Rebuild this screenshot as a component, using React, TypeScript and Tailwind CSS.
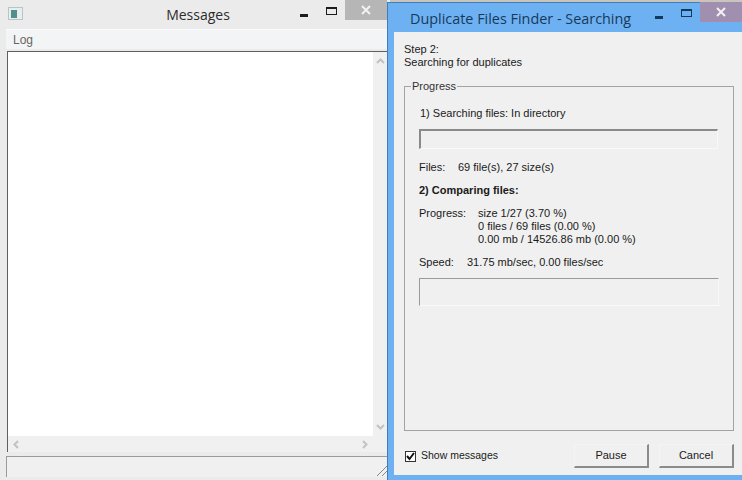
import React from 'react';

const uiFont = "font-['Liberation_Sans','Noto_Sans',sans-serif]";

const WindowControls = ({ dark, closeClass, gap }: { dark: string; closeClass: string; gap: string }) => (
  <div className="flex items-start">
    <div className={`mt-[14px] h-[3px] w-[8px] ${dark}`} />
    <div className={`${gap} mt-[7px] h-[8px] w-[11px] border border-t-2 ${dark === 'bg-[#1c1c1c]' ? 'border-[#1c1c1c]' : 'border-[#123a5c]'}`} />
    <div className={`ml-[8px] flex h-[20px] w-[42px] items-center justify-center ${closeClass}`}>
      <svg width="10" height="10" viewBox="0 0 10 10">
        <path d="M1 1 L9 9 M9 1 L1 9" stroke="#f4f0f4" strokeWidth="2" fill="none" />
      </svg>
    </div>
  </div>
);

const Chevron = ({ d }: { d: string }) => (
  <svg width="9" height="9" viewBox="0 0 9 9">
    <path d={d} stroke="#c2c2c2" strokeWidth="2" fill="none" />
  </svg>
);

const SunkenBar = ({ className }: { className: string }) => (
  <div className={`border-r border-b border-r-[#f8f8f8] border-b-[#fafafa] ${className}`} />
);

const Button = ({ label }: { label: string }) => (
  <div className="flex h-[24px] w-[75px] items-center justify-center border border-t-[#f4f4f4] border-l-[#f4f4f4] border-r-2 border-b-2 border-r-[#8b8b8b] border-b-[#8b8b8b] bg-[#f0f0f0] text-[11px] text-[#1a1a1a]">
    {label}
  </div>
);

export default function App() {
  return (
    <div className={`relative h-[480px] w-[742px] overflow-hidden bg-[#c9c4bd] ${uiFont}`}>
      {/* Messages window */}
      <div className="absolute left-0 top-0 flex h-[480px] w-[390px] flex-col bg-[#ebebeb]">
        <div className="flex h-[29px] shrink-0 items-start">
          <div className="ml-[8px] mt-[7px] flex h-[13px] w-[15px] items-center border border-[#b9c4c4] bg-[#e6eeee] pl-[2px]">
            <div className="h-[8px] w-[6px] bg-[#4f8f8c]" />
          </div>
          <div className="ml-[143px] mt-[4px] w-[64px] whitespace-nowrap text-center font-['Open_Sans',sans-serif] text-[14px] leading-[21px] text-[#2b2b2b]">Messages</div>
          <div className="ml-[70px]">
            <WindowControls dark="bg-[#1c1c1c]" closeClass="bg-[#b6b6b6]" gap="ml-[18px]" />
          </div>
        </div>
        <div className="ml-[6px] flex h-[20px] shrink-0 items-center border-t border-[#fafafa] bg-[#f3f4f5] pl-[7px] text-[12px] text-[#666666]">Log</div>
        <div className="ml-[7px] mt-[2px] flex h-[401px] shrink-0 flex-col border-l border-t border-[#5f5f5f] bg-[#f0f0f0]">
          <div className="flex h-[384px]">
            <div className="w-[365px] bg-white" />
            <div className="flex w-[14px] flex-col items-center justify-between pb-[5px] pt-[5px]">
              <Chevron d="M1 6 L4.5 2.5 L8 6" />
              <Chevron d="M1 3 L4.5 6.5 L8 3" />
            </div>
          </div>
          <div className="flex h-[16px] w-[365px] items-center justify-between px-[4px]">
            <Chevron d="M6 1 L2.5 4.5 L6 8" />
            <Chevron d="M3 1 L6.5 4.5 L3 8" />
          </div>
        </div>
        <div className="ml-[6px] mt-[4px] h-[21px] w-[381px] border-l border-t border-[#9a9a9a] bg-[#f0f0f0]" />
      </div>

      {/* resize grip */}
      <svg width="12" height="12" viewBox="0 0 12 12" className="absolute left-[376px] top-[465px]">
        <path d="M1 11 L11 1 M6 11 L11 6" stroke="#8a8a8a" strokeWidth="1" fill="none" />
      </svg>

      {/* Duplicate Files Finder window */}
      <div className="absolute left-[387px] top-[2px] flex h-[478px] w-[355px] flex-col border-l border-t border-[#3f7fb8] bg-[#6db1f3]">
        <div className="flex h-[29px] shrink-0 items-start">
          <div className="ml-[22px] mt-[5px] w-[235px] whitespace-nowrap font-['Open_Sans',sans-serif] text-[14.4px] leading-[21px] text-[#17395a]">Duplicate Files Finder - Searching</div>
          <div className="ml-[12px] -mt-[1px]">
            <WindowControls dark="bg-[#123a5c]" closeClass="bg-[#a08fae]" gap="ml-[18px]" />
          </div>
        </div>
        <div className="ml-[6px] flex h-[443px] w-[348px] shrink-0 flex-col bg-[#f0f0f0] pl-[10px] text-[11px] text-[#1a1a1a]">
          <div className="mt-[11px] leading-[13px]">Step 2:</div>
          <div className="leading-[13px]">Searching for duplicates</div>

          <div className="relative mt-[17px] h-[345px] w-[330px] border border-[#a3a3a3] pl-[14px]">
            <div className="absolute -top-[7px] left-[6px] bg-[#f0f0f0] px-[1px] leading-[13px] text-[#333333]">Progress</div>
            <div className="ml-[1px] mt-[20px] leading-[13px]">1) Searching files: In directory</div>
            <SunkenBar className="mt-[9px] h-[20px] w-[299px] border-t-2 border-l-2 border-t-[#8a8a8a] border-l-[#8a8a8a]" />
            <div className="mt-[12px] flex leading-[13px]">
              <span className="w-[39px]">Files:</span>
              <span>69 file(s), 27 size(s)</span>
            </div>
            <div className="mt-[10px] font-bold leading-[13px]">2) Comparing files:</div>
            <div className="mt-[10px] flex leading-[13px]">
              <span className="w-[59px]">Progress:</span>
              <div>
                <div>size 1/27 (3.70 %)</div>
                <div>0 files / 69 files (0.00 %)</div>
                <div>0.00 mb / 14526.86 mb (0.00 %)</div>
              </div>
            </div>
            <div className="mt-[10px] flex leading-[13px]">
              <span className="w-[48px]">Speed:</span>
              <span>31.75 mb/sec, 0.00 files/sec</span>
            </div>
            <SunkenBar className="mt-[9px] h-[28px] w-[300px] border-t border-l border-t-[#9a9a9a] border-l-[#9a9a9a]" />
          </div>

          <div className="mt-[13px] flex items-center">
            <div className="ml-[1px] flex h-[11px] w-[11px] items-center justify-center border border-[#333333] bg-white">
              <svg width="9" height="9" viewBox="0 0 9 9">
                <path d="M1 4 L3.5 7 L8 1" stroke="#111111" strokeWidth="2" fill="none" />
              </svg>
            </div>
            <span className="ml-[5px] mr-[77px] w-[76px] whitespace-nowrap text-[10.5px]">Show messages</span>
            <Button label="Pause" />
            <div className="ml-[10px]">
              <Button label="Cancel" />
            </div>
          </div>
        </div>
      </div>
    </div>
  );
}
